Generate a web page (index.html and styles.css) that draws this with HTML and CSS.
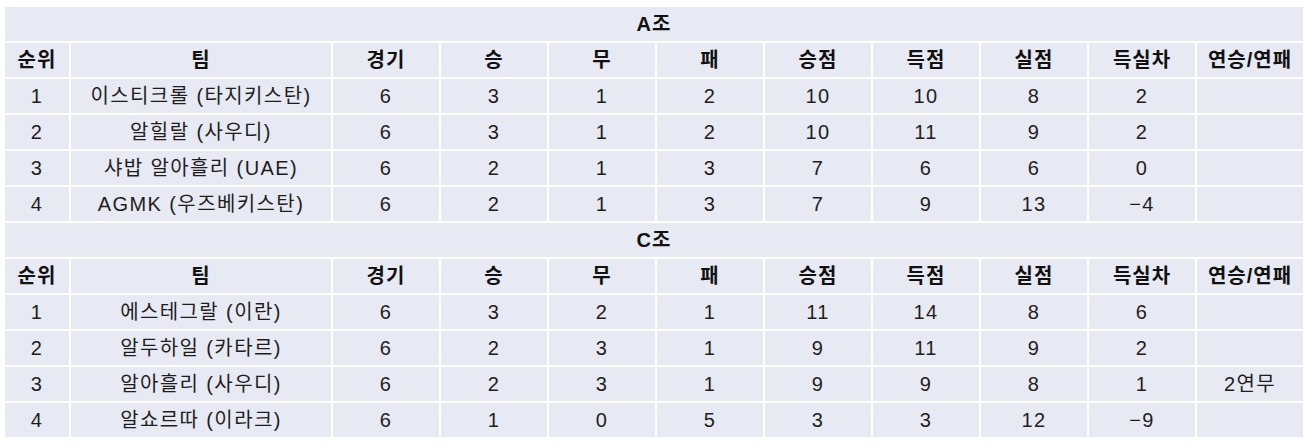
FILE: index.html
```html
<!DOCTYPE html>
<html lang="ko">
<head>
<meta charset="utf-8">
<link rel="stylesheet" href="styles.css">
</head>
<body>
<table class="standings">
  <colgroup>
    <col class="c-rank"><col class="c-team"><col class="c-num"><col class="c-num"><col class="c-num"><col class="c-num"><col class="c-num"><col class="c-num"><col class="c-num"><col class="c-num"><col class="c-num">
  </colgroup>
  <tbody>
    <tr><th colspan="11" class="group">A조</th></tr>
    <tr class="head"><th>순위</th><th>팀</th><th>경기</th><th>승</th><th>무</th><th>패</th><th>승점</th><th>득점</th><th>실점</th><th>득실차</th><th>연승/연패</th></tr>
    <tr><td>1</td><td>이스티크롤 (타지키스탄)</td><td>6</td><td>3</td><td>1</td><td>2</td><td>10</td><td>10</td><td>8</td><td>2</td><td></td></tr>
    <tr><td>2</td><td>알힐랄 (사우디)</td><td>6</td><td>3</td><td>1</td><td>2</td><td>10</td><td>11</td><td>9</td><td>2</td><td></td></tr>
    <tr><td>3</td><td>샤밥 알아흘리 (UAE)</td><td>6</td><td>2</td><td>1</td><td>3</td><td>7</td><td>6</td><td>6</td><td>0</td><td></td></tr>
    <tr><td>4</td><td>AGMK (우즈베키스탄)</td><td>6</td><td>2</td><td>1</td><td>3</td><td>7</td><td>9</td><td>13</td><td>−4</td><td></td></tr>
    <tr><th colspan="11" class="group">C조</th></tr>
    <tr class="head"><th>순위</th><th>팀</th><th>경기</th><th>승</th><th>무</th><th>패</th><th>승점</th><th>득점</th><th>실점</th><th>득실차</th><th>연승/연패</th></tr>
    <tr><td>1</td><td>에스테그랄 (이란)</td><td>6</td><td>3</td><td>2</td><td>1</td><td>11</td><td>14</td><td>8</td><td>6</td><td></td></tr>
    <tr><td>2</td><td>알두하일 (카타르)</td><td>6</td><td>2</td><td>3</td><td>1</td><td>9</td><td>11</td><td>9</td><td>2</td><td></td></tr>
    <tr><td>3</td><td>알아흘리 (사우디)</td><td>6</td><td>2</td><td>3</td><td>1</td><td>9</td><td>9</td><td>8</td><td>1</td><td>2연무</td></tr>
    <tr><td>4</td><td>알쇼르따 (이라크)</td><td>6</td><td>1</td><td>0</td><td>5</td><td>3</td><td>3</td><td>12</td><td>−9</td><td></td></tr>
  </tbody>
</table>
</body>
</html>
```

FILE: styles.css
```css
html, body {
  margin: 0;
  padding: 0;
  background: #ffffff;
}

body {
  font-family: "Liberation Sans", "Noto Sans CJK KR", sans-serif;
  font-size: 20px;
  color: #1e1e1e;
}

.standings {
  margin: 5px 0 0 3px;
  border-collapse: separate;
  border-spacing: 2px;
  table-layout: fixed;
  width: 1302px;
}

.c-rank { width: 64px; }
.c-team { width: 260px; }
.c-num { width: 106px; }

.standings th,
.standings td {
  background: #e7e9f3;
  height: 34px;
  padding: 0;
  text-align: center;
  vertical-align: middle;
  line-height: 20px;
  white-space: nowrap;
  overflow: hidden;
  letter-spacing: 1.4px;
}

.standings th {
  font-weight: bold;
  color: #111111;
  letter-spacing: 1px;
}

.standings td {
  font-weight: normal;
}
```
